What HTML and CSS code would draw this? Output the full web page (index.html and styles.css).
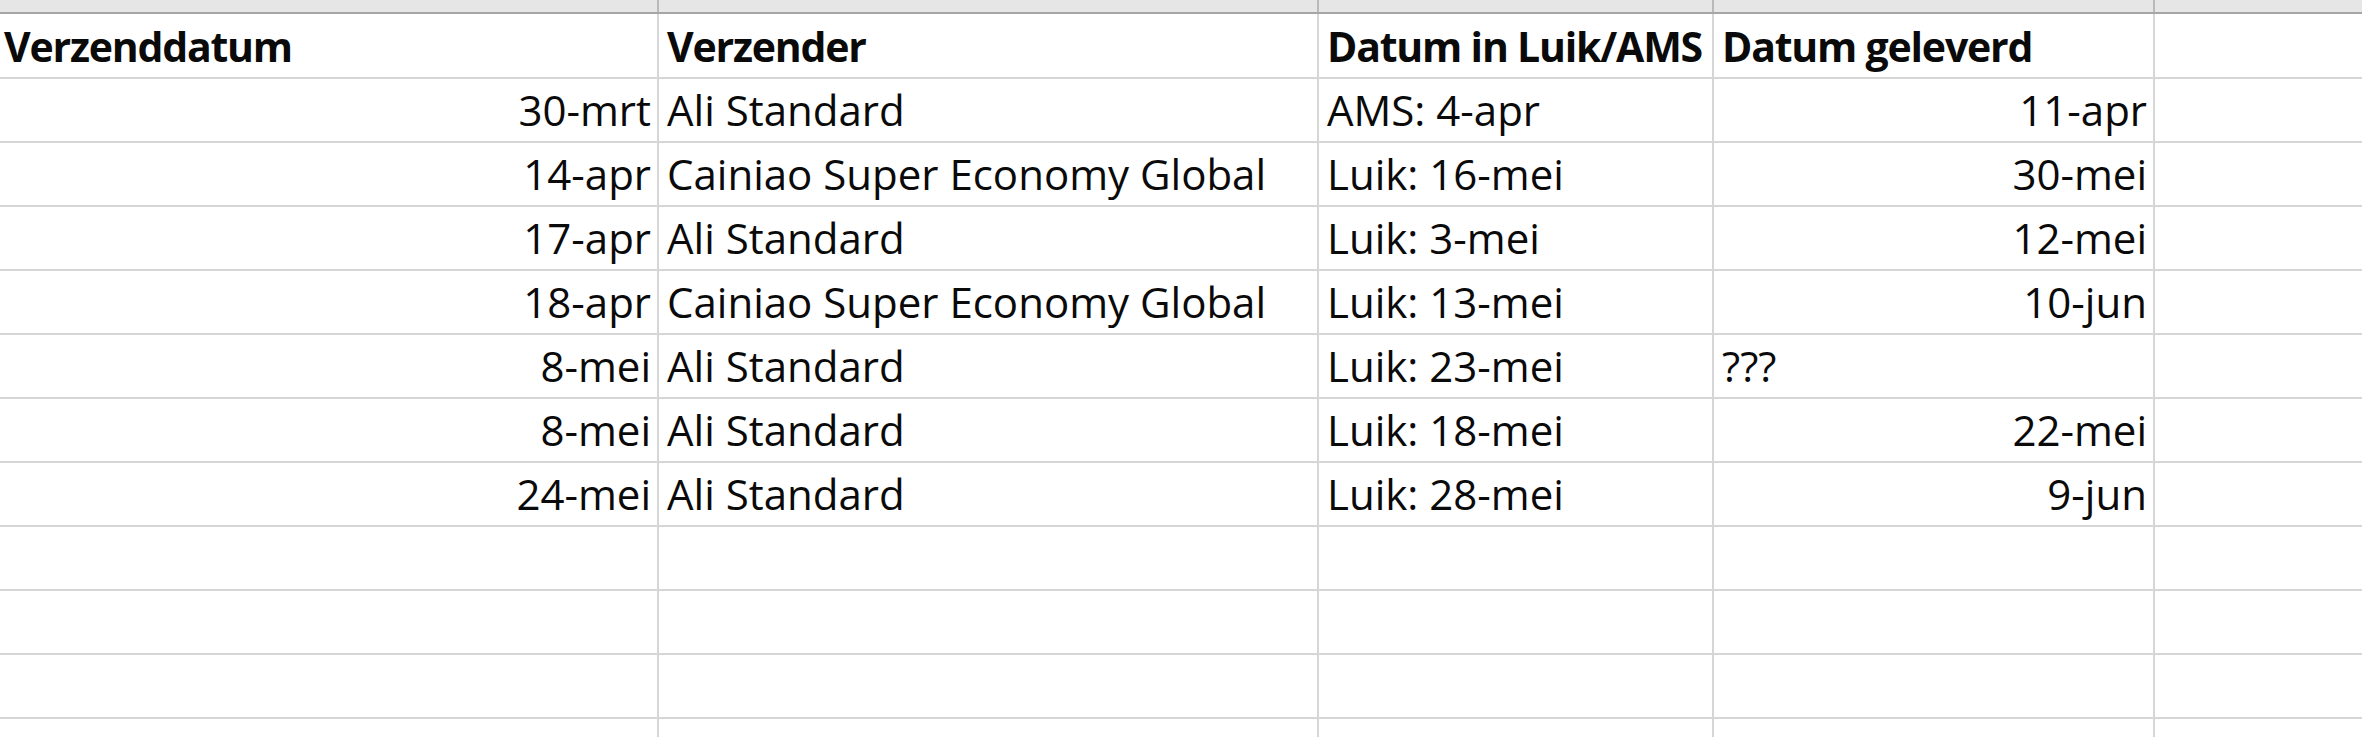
FILE: index.html
```html
<!DOCTYPE html>
<html lang="nl">
<head>
<meta charset="utf-8">
<title>Verzending</title>
<link rel="stylesheet" href="styles.css">
</head>
<body>
<div class="colheads">
  <div class="ch"></div><div class="ch"></div><div class="ch"></div><div class="ch"></div><div class="ch"></div>
</div>
<div class="sheet">
  <div class="c a hd">Verzenddatum</div><div class="c hd">Verzender</div><div class="c hd">Datum in Luik/AMS</div><div class="c hd">Datum geleverd</div><div class="c"></div>

  <div class="c a r">30-mrt</div><div class="c">Ali Standard</div><div class="c">AMS: 4-apr</div><div class="c r">11-apr</div><div class="c"></div>
  <div class="c a r">14-apr</div><div class="c">Cainiao Super Economy Global</div><div class="c">Luik: 16-mei</div><div class="c r">30-mei</div><div class="c"></div>
  <div class="c a r">17-apr</div><div class="c">Ali Standard</div><div class="c">Luik: 3-mei</div><div class="c r">12-mei</div><div class="c"></div>
  <div class="c a r">18-apr</div><div class="c">Cainiao Super Economy Global</div><div class="c">Luik: 13-mei</div><div class="c r">10-jun</div><div class="c"></div>
  <div class="c a r">8-mei</div><div class="c">Ali Standard</div><div class="c">Luik: 23-mei</div><div class="c">???</div><div class="c"></div>
  <div class="c a r">8-mei</div><div class="c">Ali Standard</div><div class="c">Luik: 18-mei</div><div class="c r">22-mei</div><div class="c"></div>
  <div class="c a r">24-mei</div><div class="c">Ali Standard</div><div class="c">Luik: 28-mei</div><div class="c r">9-jun</div><div class="c"></div>

  <div class="c a"></div><div class="c"></div><div class="c"></div><div class="c"></div><div class="c"></div>
  <div class="c a"></div><div class="c"></div><div class="c"></div><div class="c"></div><div class="c"></div>
  <div class="c a"></div><div class="c"></div><div class="c"></div><div class="c"></div><div class="c"></div>
  <div class="c a"></div><div class="c"></div><div class="c"></div><div class="c"></div><div class="c"></div>
</div>
</body>
</html>
```

FILE: styles.css
```css
html, body {
  margin: 0;
  padding: 0;
  background: #ffffff;
  overflow: hidden;
  height: 737px;
}

body {
  font-family: "Open Sans", "Liberation Sans", sans-serif;
  color: #000;
}

.colheads {
  display: grid;
  grid-template-columns: 657px 658px 393px 439px 1fr;
  column-gap: 2px;
  background: #b9b9b9;
  border-bottom: 2px solid #a5a5a5;
}

.ch {
  height: 12px;
  background: #e6e6e6;
}

.sheet {
  display: grid;
  grid-template-columns: 657px 658px 393px 439px 1fr;
  grid-template-rows: 63px;
  grid-auto-rows: 62px;
  gap: 2px;
  background: #d6d6d6;
}

.c {
  background: #ffffff;
  font-size: 42px;
  line-height: 62px;
  padding: 0 6px 0 8px;
  white-space: nowrap;
  overflow: hidden;
  color: #0a0a0a;
}

.c.a {
  padding-left: 4px;
}

.c.hd {
  font-size: 41px;
  font-weight: 700;
  letter-spacing: -1.2px;
  padding-top: 1px;
}

.c.r {
  text-align: right;
}
```
